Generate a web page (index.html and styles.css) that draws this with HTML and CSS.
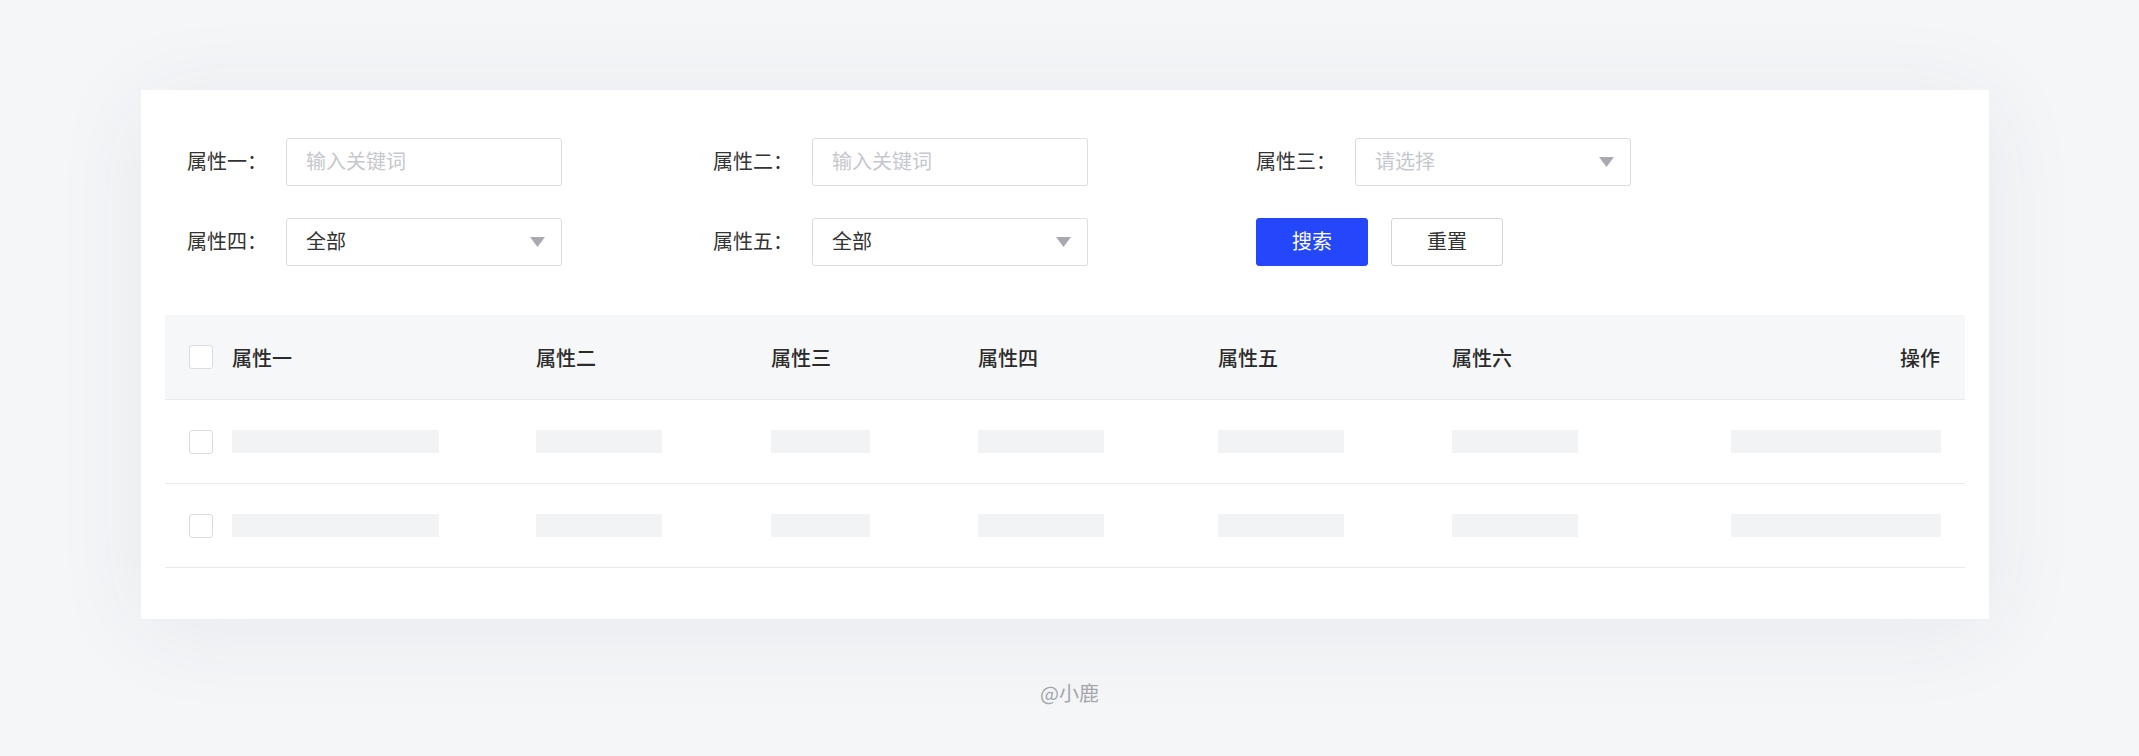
FILE: index.html
```html
<!DOCTYPE html>
<html lang="zh-CN">
<head>
  <meta charset="UTF-8">
  <meta name="viewport" content="width=device-width, initial-scale=1.0">
  <title>列表页</title>
  <link rel="stylesheet" href="styles.css">
</head>
<body>
  <div class="page">
    <div class="card">
      <!-- 筛选区 -->
      <div class="filter">
        <div class="field">
          <span class="field-label">属性一：</span>
          <input class="field-input" type="text" placeholder="输入关键词">
        </div>
        <div class="field">
          <span class="field-label">属性二：</span>
          <input class="field-input" type="text" placeholder="输入关键词">
        </div>
        <div class="field">
          <span class="field-label">属性三：</span>
          <div class="field-select placeholder">
            <span>请选择</span>
            <svg class="arrow" width="15" height="10" viewBox="0 0 15 10"><polygon points="0,0 15,0 7.5,10" fill="#a9aab1"/></svg>
          </div>
        </div>
        <div class="field">
          <span class="field-label">属性四：</span>
          <div class="field-select">
            <span>全部</span>
            <svg class="arrow" width="15" height="10" viewBox="0 0 15 10"><polygon points="0,0 15,0 7.5,10" fill="#a9aab1"/></svg>
          </div>
        </div>
        <div class="field">
          <span class="field-label">属性五：</span>
          <div class="field-select">
            <span>全部</span>
            <svg class="arrow" width="15" height="10" viewBox="0 0 15 10"><polygon points="0,0 15,0 7.5,10" fill="#a9aab1"/></svg>
          </div>
        </div>
        <div class="actions">
          <button class="btn btn-primary">搜索</button>
          <button class="btn">重置</button>
        </div>
      </div>

      <!-- 表格 -->
      <div class="table">
        <div class="row head">
          <span class="check"></span>
          <span>属性一</span>
          <span>属性二</span>
          <span>属性三</span>
          <span>属性四</span>
          <span>属性五</span>
          <span>属性六</span>
          <span class="op">操作</span>
        </div>
        <div class="row">
          <span class="check"></span>
          <span class="bar w1"></span>
          <span class="bar w2"></span>
          <span class="bar w3"></span>
          <span class="bar w2"></span>
          <span class="bar w2"></span>
          <span class="bar w2"></span>
          <span class="op"><span class="bar w4"></span></span>
        </div>
        <div class="row">
          <span class="check"></span>
          <span class="bar w1"></span>
          <span class="bar w2"></span>
          <span class="bar w3"></span>
          <span class="bar w2"></span>
          <span class="bar w2"></span>
          <span class="bar w2"></span>
          <span class="op"><span class="bar w4"></span></span>
        </div>
      </div>
    </div>

    <div class="footer">@小鹿</div>
  </div>
</body>
</html>
```

FILE: styles.css
```css
/* General Styles */
body {
  margin: 0;
  padding: 0;
  background: #f5f6f8;
  font-family: 'Noto Sans CJK SC', 'Noto Sans', sans-serif;
  font-size: 20px;
  color: #333;
  height: 756px;
  overflow: hidden;
}

.page {
  padding-top: 90px;
}

/* Card */
.card {
  width: 1800px;
  margin-left: 141px;
  padding: 48px 24px 51px;
  background: #fff;
  box-shadow: 0 10px 90px rgba(40, 50, 90, 0.07);
}

/* Filter */
.filter {
  display: grid;
  grid-template-columns: 526px 543px auto;
  row-gap: 32px;
  padding-left: 22px;
}

.field {
  display: flex;
  align-items: center;
}

.field-label {
  width: 99px;
  flex-shrink: 0;
  padding-bottom: 3px;
  color: #333;
  white-space: nowrap;
}

.field-input,
.field-select {
  box-sizing: border-box;
  width: 276px;
  height: 48px;
  border: 1px solid #dcdde2;
  border-radius: 3px;
  padding: 0 16px 3px 19px;
  font-family: inherit;
  font-size: 20px;
  color: #333;
  background: #fff;
  outline: none;
}

.field-input::placeholder {
  color: #c6c8cd;
}

.field-select {
  display: flex;
  align-items: center;
  justify-content: space-between;
}

.field-select.placeholder span {
  color: #c6c8cd;
}

.arrow {
  display: block;
  margin-top: 3px;
}

.actions {
  display: flex;
  gap: 23px;
}

.btn {
  box-sizing: border-box;
  width: 112px;
  height: 48px;
  padding: 0 0 3px;
  border: 1px solid #d3d4d9;
  border-radius: 3px;
  background: #fff;
  font-family: inherit;
  font-size: 20px;
  color: #333;
  cursor: pointer;
}

.btn-primary {
  background: #2447fb;
  border-color: #2447fb;
  color: #fff;
}

/* Table */
.table {
  margin-top: 49px;
}

.row {
  display: grid;
  grid-template-columns: 43px 304px 235px 207px 240px 234px 279px 1fr;
  align-items: center;
  height: 83px;
  padding: 0 25px 0 24px;
  border-bottom: 1px solid #e9eaed;
}

.row.head {
  height: 84px;
  background: #f6f7f9;
  font-weight: 500;
  color: #2b2b2b;
}

.check {
  box-sizing: border-box;
  width: 24px;
  height: 24px;
  border: 1px solid #dcdde2;
  border-radius: 3px;
  background: #fff;
}

.op {
  display: flex;
  justify-content: flex-end;
}

.bar {
  display: block;
  height: 23px;
  background: #f2f3f5;
}

.w1 { width: 207px; }
.w2 { width: 126px; }
.w3 { width: 99px; }
.w4 { width: 210px; }

/* Footer */
.footer {
  margin-top: 59px;
  text-align: center;
  color: #a5a7ad;
}
```
